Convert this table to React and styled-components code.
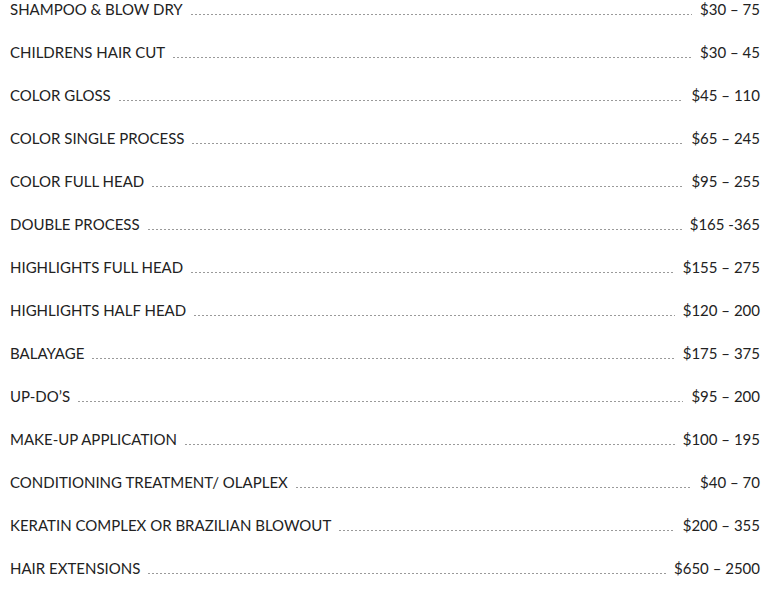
import React from 'react';
import styled, { createGlobalStyle } from 'styled-components';

const GlobalStyle = createGlobalStyle`
  body {
    margin: 0;
    background: #fff;
    font-family: Lato, "Open Sans", sans-serif;
  }
`;

const PriceList = styled.div`
  width: 770px;
  padding: 0 10px;
  box-sizing: border-box;
  display: flex;
  flex-direction: column;
  gap: 25px;
`;

const Row = styled.div`
  display: flex;
  align-items: baseline;
  font-size: 15px;
  line-height: 18px;
  color: #222;
`;

const Service = styled.span`
  white-space: nowrap;
`;

const Leader = styled.span`
  flex: 1;
  height: 1px;
  margin: 0 8px;
  background: repeating-linear-gradient(
    to right,
    #9a9a9a 0,
    #9a9a9a 2px,
    transparent 2px,
    transparent 4px
  );
`;

const Price = styled.span`
  white-space: nowrap;
`;

const services = [
  ['SHAMPOO & BLOW DRY', '$30 – 75'],
  ['CHILDRENS HAIR CUT', '$30 – 45'],
  ['COLOR GLOSS', '$45 – 110'],
  ['COLOR SINGLE PROCESS', '$65 – 245'],
  ['COLOR FULL HEAD', '$95 – 255'],
  ['DOUBLE PROCESS', '$165 -365'],
  ['HIGHLIGHTS FULL HEAD', '$155 – 275'],
  ['HIGHLIGHTS HALF HEAD', '$120 – 200'],
  ['BALAYAGE', '$175 – 375'],
  ['UP-DO’S', '$95 – 200'],
  ['MAKE-UP APPLICATION', '$100 – 195'],
  ['CONDITIONING TREATMENT/ OLAPLEX', '$40 – 70'],
  ['KERATIN COMPLEX OR BRAZILIAN BLOWOUT', '$200 – 355'],
  ['HAIR EXTENSIONS', '$650 – 2500'],
];

const App = () => (
  <>
    <GlobalStyle />
    <PriceList>
      {services.map(([name, price]) => (
        <Row key={name}>
          <Service>{name}</Service>
          <Leader />
          <Price>{price}</Price>
        </Row>
      ))}
    </PriceList>
  </>
);

export default App;
